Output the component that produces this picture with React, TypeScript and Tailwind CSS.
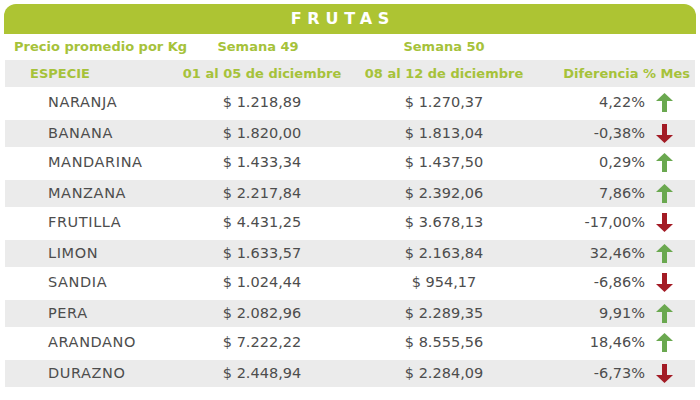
type Row = { name: string; w49: string; w50: string; diff: string; up: boolean };

const rows: Row[] = [
  { name: 'NARANJA', w49: '$ 1.218,89', w50: '$ 1.270,37', diff: '4,22%', up: true },
  { name: 'BANANA', w49: '$ 1.820,00', w50: '$ 1.813,04', diff: '-0,38%', up: false },
  { name: 'MANDARINA', w49: '$ 1.433,34', w50: '$ 1.437,50', diff: '0,29%', up: true },
  { name: 'MANZANA', w49: '$ 2.217,84', w50: '$ 2.392,06', diff: '7,86%', up: true },
  { name: 'FRUTILLA', w49: '$ 4.431,25', w50: '$ 3.678,13', diff: '-17,00%', up: false },
  { name: 'LIMON', w49: '$ 1.633,57', w50: '$ 2.163,84', diff: '32,46%', up: true },
  { name: 'SANDIA', w49: '$ 1.024,44', w50: '$ 954,17', diff: '-6,86%', up: false },
  { name: 'PERA', w49: '$ 2.082,96', w50: '$ 2.289,35', diff: '9,91%', up: true },
  { name: 'ARANDANO', w49: '$ 7.222,22', w50: '$ 8.555,56', diff: '18,46%', up: true },
  { name: 'DURAZNO', w49: '$ 2.448,94', w50: '$ 2.284,09', diff: '-6,73%', up: false },
];

const cols = 'grid grid-cols-[170px_174px_190px_1fr]';

function Arrow({ up }: { up: boolean }) {
  if (up) {
    return (
      <svg width="17" height="19" viewBox="0 0 17 19" className="shrink-0">
        <polygon points="0,8 8.5,0 17,8" fill="#6aa84f" />
        <rect x="6" y="7" width="5" height="12" fill="#6aa84f" />
      </svg>
    );
  }
  return (
    <svg width="17" height="19" viewBox="0 0 17 19" className="shrink-0">
      <rect x="6" y="0" width="5" height="12" fill="#a31b25" />
      <polygon points="0,11 8.5,19 17,11" fill="#a31b25" />
    </svg>
  );
}

export default function App() {
  return (
    <div className="w-[700px] h-[400px] bg-white pt-[4px] px-[4px] font-['DejaVu_Sans',sans-serif]">
      <div className="h-[30px] bg-[#adc433] rounded-t-[12px] flex items-center justify-center">
        <span className="text-white font-bold text-[16px] tracking-[0.36em] pl-[0.36em] ml-[-20px]">FRUTAS</span>
      </div>

      <div className={`${cols} h-[26px] items-center text-[#a6c23a] font-bold text-[13px] whitespace-nowrap px-[1px]`}>
        <div className="pl-[9px]">Precio promedio por Kg</div>
        <div className="text-center pr-[8px]">Semana 49</div>
        <div className="text-center">Semana 50</div>
        <div />
      </div>

      <div className={`${cols} h-[27px] items-center bg-[#ebebeb] text-[#a6c23a] font-bold text-[13px] whitespace-nowrap mx-[1px]`}>
        <div className="pl-[25px]">ESPECIE</div>
        <div className="text-center">01 al 05 de diciembre</div>
        <div className="text-center">08 al 12 de diciembre</div>
        <div className="text-right pr-[5px]">Diferencia % Mes</div>
      </div>

      <div className="mx-[1px] text-[#4d4d4d] text-[14.5px] whitespace-nowrap">
        {rows.map((r, i) => (
          <div key={r.name} className={i % 2 === 1 ? 'h-[30px] pt-[3px]' : 'h-[30px]'}>
            <div className={`${cols} h-full items-center ${i % 2 === 1 ? 'bg-[#ebebeb]' : ''}`}>
              <div className="pl-[43px] tracking-[0.6px] pt-[1px]">{r.name}</div>
              <div className="text-center pt-[1px]">{r.w49}</div>
              <div className="text-center pt-[1px]">{r.w50}</div>
              <div className="flex items-center justify-end pr-[22px] gap-[11px]">
                <span className="pt-[1px]">{r.diff}</span>
                <Arrow up={r.up} />
              </div>
            </div>
          </div>
        ))}
      </div>
    </div>
  );
}
